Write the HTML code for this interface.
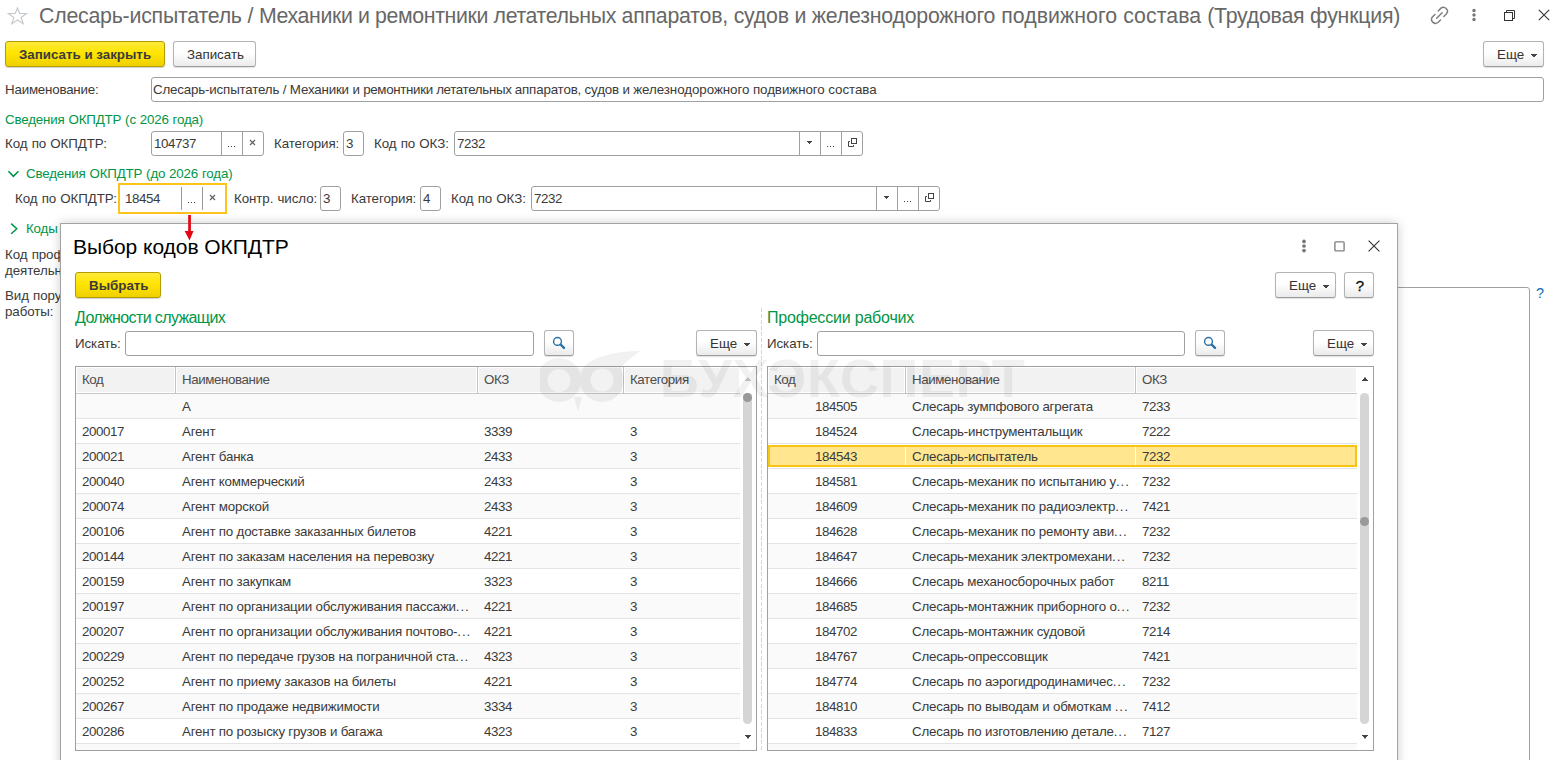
<!DOCTYPE html>
<html lang="ru"><head><meta charset="utf-8"><title>1C</title>
<style>
*{box-sizing:border-box;margin:0;padding:0}
html,body{width:1555px;height:760px;overflow:hidden;background:#fff}
body{font-family:"Liberation Sans",sans-serif;font-size:13.33px;letter-spacing:-0.2px;color:#3a3a3a;position:relative}
.a{position:absolute;white-space:nowrap}
.t{position:absolute;white-space:nowrap;line-height:16px;height:17px;padding-top:1px;letter-spacing:-0.08px;word-spacing:0.6px}
.g{color:#009646}
.title{left:39px;top:3px;font-size:21.3px;letter-spacing:-0.215px !important;line-height:26px;height:26px;color:#676767}
.btn{position:absolute;height:26px;border:1px solid #b3b3b3;border-bottom-color:#9c9c9c;border-radius:3px;background:linear-gradient(#fff 0%,#fff 45%,#ebebeb 100%);box-shadow:0 1px 1px rgba(0,0,0,.12);line-height:24px;white-space:nowrap;color:#333}
.btn.y{border-color:#b39b00;background:linear-gradient(#ffe93d 0%,#ffe500 45%,#efd000 100%);font-weight:bold;color:#3b3b3b;box-shadow:0 1px 1px rgba(0,0,0,.18)}
.btn .tx{position:absolute;top:1px;letter-spacing:0}
.tri{position:absolute;width:6px;height:3px;background:linear-gradient(#444,#444) 0 0/6px 1px no-repeat,linear-gradient(#444,#444) 1px 1px/4px 1px no-repeat,linear-gradient(#444,#444) 2px 2px/2px 1px no-repeat}
.tri5{position:absolute;width:5px;height:3px;background:linear-gradient(#444,#444) 0 0/5px 1px no-repeat,linear-gradient(#444,#444) 1px 1px/3px 1px no-repeat,linear-gradient(#444,#444) 2px 2px/1px 1px no-repeat}
.fld{position:absolute;height:25px;border:1px solid #a0a0a0;border-radius:3px;background:#fff;line-height:23px}
.fld .v{position:absolute;left:1px;top:0}
.sep{position:absolute;top:0;bottom:0;width:1px;background:#a0a0a0}
.dots{position:absolute;top:14px;width:7px;height:1px;background:
 linear-gradient(90deg,#444 0 1px,transparent 1px 3px,#444 3px 4px,transparent 4px 6px,#444 6px 7px)}
.x{position:absolute;width:7px;height:7px}
.tbl{position:absolute;border:1px solid #a0a0a0;background:#fff;overflow:hidden}
.hd{position:absolute;left:0;top:0;height:27px;background:#fff;border-bottom:1px solid #c8c8c8}
.hcell{position:absolute;top:0;height:26px;background:#f2f2f2;border:1px solid #fff;line-height:24px;color:#4d4d4d;white-space:nowrap;letter-spacing:-0.4px}
.hcell span{position:absolute;left:5px;top:0}
.hsep{position:absolute;top:0;width:1px;height:27px;background:#c4c4c4}
.rows{position:absolute;left:0;top:27px;height:360px}
.r{position:absolute;left:0;right:0;height:25px;border-bottom:1px solid #e3e3e3;background:#fff;line-height:26px}
.r.odd{background:#fafafa}
.r.sel{background:#fff}
.selbox{position:absolute;left:0;right:0;top:1px;height:22px;background:#ffe68f;border:2px solid #f9c515}
.selbox i{position:absolute;top:0;width:1px;height:18px;background:#fff}
.c{position:absolute;top:0;white-space:nowrap}
.track{position:absolute;width:8.6px;border-radius:4.3px;background:#d5d5d5}
.knob{position:absolute;width:8.8px;height:8.8px;border-radius:4.4px;background:#999}
.up{position:absolute;width:6px;height:4px;--c:#444;background:linear-gradient(var(--c),var(--c)) 0 3px/6px 1px no-repeat,linear-gradient(var(--c),var(--c)) 1px 2px/4px 1px no-repeat,linear-gradient(var(--c),var(--c)) 2px 1px/2px 1px no-repeat,linear-gradient(var(--t),var(--t)) 2px 0/2px 1px no-repeat;--t:#a8a8a8}
.dn{position:absolute;width:6px;height:4px;--c:#444;background:linear-gradient(#b0b0b0,#b0b0b0) 2px 3px/2px 1px no-repeat,linear-gradient(var(--c),var(--c)) 0 0/6px 1px no-repeat,linear-gradient(var(--c),var(--c)) 1px 1px/4px 1px no-repeat,linear-gradient(var(--c),var(--c)) 2px 2px/2px 1px no-repeat}
#dlg{position:absolute;left:60px;top:223px;width:1338px;height:560px;background:#fff;border:1px solid #a3a3a3;box-shadow:0 0 10px rgba(0,0,0,.2)}
.wm{position:absolute;opacity:.05;color:#000;pointer-events:none}
.n{letter-spacing:-0.41px}
.btn.y .tx{letter-spacing:0px}
.title,.big{letter-spacing:0}
.e{letter-spacing:0.9px}
.t.g{letter-spacing:-0.16px;word-spacing:0.3px}
.fld .v.n{left:2px}

</style></head>
<body>
<!-- ===== main form ===== -->
<svg class="a" style="left:6px;top:5px" width="23" height="22" viewBox="0 0 23 22"><path d="M11.5 3.05 L13.75 8.45 L20.5 8.45 L15.1 12.5 L17.2 18.7 L11.5 15 L5.8 18.7 L7.9 12.5 L2.35 8.45 L9.25 8.45 Z" fill="none" stroke="#c3c8cc" stroke-width="1.1" stroke-linejoin="miter"/></svg>
<div class="a title">Слесарь-испытатель / <span style="letter-spacing:-0.362px">Механики и ремонтники летательных </span>аппаратов, судов и железнодорожного<span style="letter-spacing:0.05px"> подвижного состава </span>(Трудовая функция)</div>

<!-- top right icons -->
<svg class="a" style="left:1430px;top:6px" width="19" height="19" viewBox="0 0 19 19" fill="none" stroke="#7e7e7e" stroke-width="1.45" stroke-linecap="round"><path d="M8.2 4.9 L10.7 2.4 A4 4 0 0 1 16.3 8.1 L13.8 10.6"/><path d="M4.9 8.4 L2.4 10.9 A4 4 0 0 0 8 16.5 L10.5 14"/><path d="M6.7 12.2 L12.1 6.8"/></svg>
<svg class="a" style="left:1471px;top:8px" width="6" height="14" viewBox="0 0 6 14"><circle cx="3" cy="2.5" r="1.7" fill="#777"/><circle cx="3" cy="7" r="1.7" fill="#777"/><circle cx="3" cy="11.5" r="1.7" fill="#777"/></svg>
<svg class="a" style="left:1504px;top:10px" width="12" height="12" viewBox="0 0 12 12" fill="none" stroke="#333" stroke-width="1"><path d="M2.5 2.5 V0.5 H10.5 V8.5 H8.5"/><rect x="0.5" y="2.5" width="8" height="8"/></svg>
<svg class="a" style="left:1538px;top:9px" width="12" height="12" viewBox="0 0 12 12" stroke="#333" stroke-width="1.1"><path d="M0.8 0.8 L11.2 11.2 M11.2 0.8 L0.8 11.2"/></svg>

<!-- command bar -->
<div class="btn y" style="left:5px;top:41px;width:160px"><span class="tx" style="left:13px">Записать и закрыть</span></div>
<div class="btn" style="left:173px;top:41px;width:83px"><span class="tx" style="left:13px">Записать</span></div>
<div class="btn" style="left:1483px;top:41px;width:61px"><span class="tx" style="left:13px">Еще</span><i class="tri" style="left:47px;top:12px"></i></div>

<!-- Наименование -->
<div class="t" style="left:5px;top:81px;letter-spacing:-0.2px">Наименование:</div>
<div class="fld" style="left:151px;top:77px;width:1393px"><span class="v" style="letter-spacing:-0.17px">Слесарь-испытатель / Механики и <span style="letter-spacing:-0.34px">ремонтники летательных </span>аппаратов, судов и <span style="letter-spacing:-0.055px">железнодорожного подвижного состава</span></span></div>

<!-- group 1 -->
<div class="t g" style="left:5px;top:111px">Сведения ОКПДТР (с 2026 года)</div>
<div class="t" style="left:5px;top:135px">Код по ОКПДТР:</div>
<div class="fld" style="left:151px;top:131px;width:113px"><span class="v n">104737</span><i class="sep" style="left:69px"></i><i class="dots" style="left:76px"></i><i class="sep" style="left:90px"></i>
<svg class="x" style="left:97px;top:7px" viewBox="0 0 7 7" stroke="#606060" stroke-width="1.15"><path d="M1 1 L6 6 M6 1 L1 6"/></svg></div>
<div class="t" style="left:274px;top:135px">Категория:</div>
<div class="fld" style="left:343px;top:131px;width:21px"><span class="v n">3</span></div>
<div class="t" style="left:374px;top:135px">Код по ОКЗ:</div>
<div class="fld" style="left:454px;top:131px;width:409px"><span class="v n">7232</span><i class="sep" style="left:344px"></i><i class="tri5" style="left:352px;top:9px"></i><i class="sep" style="left:365px"></i><i class="dots" style="left:372px"></i><i class="sep" style="left:386px"></i>
<svg class="a" style="left:393px;top:6px" width="9" height="9" viewBox="0 0 9 9" fill="none" stroke="#444" stroke-width="1"><rect x="3.5" y="0.5" width="5" height="5"/><path d="M2 3.5 H0.5 V8.5 H5.5 V7"/></svg></div>

<!-- group 2 -->
<svg class="a" style="left:7px;top:169px" width="14" height="10" viewBox="0 0 14 10" fill="none" stroke="#009646" stroke-width="1.6"><path d="M1.4 2.2 L6.4 7.4 L11.4 2.2"/></svg>
<div class="t g" style="left:26px;top:165px">Сведения ОКПДТР (до 2026 года)</div>
<div class="t" style="left:15px;top:190px">Код по ОКПДТР:</div>
<div class="a" style="left:118px;top:183px;width:109px;height:31px;border:2px solid #fbc31c;background:#fff">
 <span class="a n" style="left:5px;top:6px;line-height:16px">18454</span>
 <i class="a" style="left:61px;top:2px;width:1px;height:23px;background:#999"></i><i class="dots" style="left:68px;top:17px"></i>
 <i class="a" style="left:82px;top:2px;width:1px;height:23px;background:#999"></i>
 <svg class="x" style="left:89px;top:9px" viewBox="0 0 7 7" stroke="#606060" stroke-width="1.15"><path d="M1 1 L6 6 M6 1 L1 6"/></svg>
</div>
<div class="t" style="left:234px;top:190px">Контр. число:</div>
<div class="fld" style="left:320px;top:186px;width:21px"><span class="v n">3</span></div>
<div class="t" style="left:351px;top:190px">Категория:</div>
<div class="fld" style="left:420px;top:186px;width:21px"><span class="v n">4</span></div>
<div class="t" style="left:451px;top:190px">Код по ОКЗ:</div>
<div class="fld" style="left:531px;top:186px;width:409px"><span class="v n">7232</span><i class="sep" style="left:344px"></i><i class="tri5" style="left:352px;top:9px"></i><i class="sep" style="left:365px"></i><i class="dots" style="left:372px"></i><i class="sep" style="left:386px"></i>
<svg class="a" style="left:393px;top:6px" width="9" height="9" viewBox="0 0 9 9" fill="none" stroke="#444" stroke-width="1"><rect x="3.5" y="0.5" width="5" height="5"/><path d="M2 3.5 H0.5 V8.5 H5.5 V7"/></svg></div>

<!-- group 3 (partly hidden) -->
<svg class="a" style="left:9px;top:222px" width="10" height="14" viewBox="0 0 10 14" fill="none" stroke="#009646" stroke-width="1.5"><path d="M2.2 1.6 L7.8 6.7 L2.2 11.8"/></svg>
<div class="t g" style="left:26px;top:220px">Коды</div>
<div class="t" style="left:5px;top:246px">Код проф</div>
<div class="t" style="left:5px;top:262px">деятельн</div>
<div class="t" style="left:5px;top:287px">Вид пору</div>
<div class="t" style="left:5px;top:303px">работы:</div>
<div class="fld" style="left:151px;top:287px;width:1379px;height:600px"></div>
<div class="t" style="left:1536px;top:284px;font-size:14.4px;color:#0f6db8">?</div>

<!-- ===== dialog ===== -->
<div id="dlg"></div>
<div class="a" style="left:73px;top:234px;font-size:21px;letter-spacing:-0.05px;line-height:26px;color:#000">Выбор кодов ОКПДТР</div>
<!-- red arrow -->
<svg class="a" style="left:183px;top:214px" width="12" height="28" viewBox="0 0 12 28"><path d="M5.2 1 H7.9 V17 H10.5 L6.55 26.5 L1.7 17 H5.2 Z" fill="#e30613"/></svg>
<svg class="a" style="left:1301px;top:238px" width="6" height="16" viewBox="0 0 6 16"><circle cx="3" cy="3.4" r="1.85" fill="#777"/><circle cx="3" cy="8" r="1.85" fill="#777"/><circle cx="3" cy="12.6" r="1.85" fill="#777"/></svg>
<svg class="a" style="left:1334px;top:241px" width="11" height="11" viewBox="0 0 11 11" fill="none" stroke="#828282" stroke-width="1.4"><rect x="0.9" y="0.9" width="9.2" height="9" rx="0.8"/></svg>
<svg class="a" style="left:1368px;top:240px" width="12" height="12" viewBox="0 0 12 12" stroke="#333" stroke-width="1.1"><path d="M0.6 0.6 L11.4 11.4 M11.4 0.6 L0.6 11.4"/></svg>

<div class="btn y" style="left:75px;top:272px;width:86px"><span class="tx" style="left:13px">Выбрать</span></div>
<div class="btn" style="left:1275px;top:272px;width:61px"><span class="tx" style="left:13px">Еще</span><i class="tri" style="left:47px;top:12px"></i></div>
<div class="btn" style="left:1344px;top:272px;width:30px"><span class="tx" style="left:10.5px;top:1px;font-size:15.5px;color:#111;-webkit-text-stroke:0.3px #111">?</span></div>

<!-- left panel -->
<div class="a g" style="left:75px;top:309px;font-size:16px;letter-spacing:-0.62px;line-height:18px">Должности служащих</div>
<div class="t" style="left:75px;top:335px">Искать:</div>
<div class="fld" style="left:125px;top:331px;width:409px"></div>
<div class="btn" style="left:544px;top:330px;width:30px"><svg class="a" style="left:7px;top:5px" width="14" height="14" viewBox="0 0 14 14" fill="none" stroke="#2b70a4"><circle cx="5.5" cy="5.4" r="3.9" stroke-width="1.4"/><path d="M8.6 8.5 L12 11.9" stroke-width="2.4" stroke-linecap="round"/></svg></div>
<div class="btn" style="left:696px;top:330px;width:61px"><span class="tx" style="left:13px">Еще</span><i class="tri" style="left:47px;top:12px"></i></div>

<div class="tbl" style="left:75px;top:366px;width:682px;height:385px">
 <div class="hd" style="width:664px"></div>
 <div class="hcell" style="left:0;width:99px"><span>Код</span></div><i class="hsep" style="left:99px"></i>
 <div class="hcell" style="left:100px;width:301px"><span>Наименование</span></div><i class="hsep" style="left:401px"></i>
 <div class="hcell" style="left:402px;width:145px"><span>ОКЗ</span></div><i class="hsep" style="left:547px"></i>
 <div class="hcell" style="left:548px;width:116px"><span>Категория</span></div>
 <div class="rows" style="width:664px">
<div class="r odd" style="top:0px"><span class="c n" style="left:6px"></span><span class="c" style="left:106px">А</span><span class="c n" style="left:408px"></span><span class="c n" style="left:554px"></span></div>
<div class="r" style="top:25px"><span class="c n" style="left:6px">200017</span><span class="c" style="left:106px">Агент</span><span class="c n" style="left:408px">3339</span><span class="c n" style="left:554px">3</span></div>
<div class="r odd" style="top:50px"><span class="c n" style="left:6px">200021</span><span class="c" style="left:106px">Агент банка</span><span class="c n" style="left:408px">2433</span><span class="c n" style="left:554px">3</span></div>
<div class="r" style="top:75px"><span class="c n" style="left:6px">200040</span><span class="c" style="left:106px">Агент коммерческий</span><span class="c n" style="left:408px">2433</span><span class="c n" style="left:554px">3</span></div>
<div class="r odd" style="top:100px"><span class="c n" style="left:6px">200074</span><span class="c" style="left:106px">Агент морской</span><span class="c n" style="left:408px">2433</span><span class="c n" style="left:554px">3</span></div>
<div class="r" style="top:125px"><span class="c n" style="left:6px">200106</span><span class="c" style="left:106px">Агент по доставке заказанных билетов</span><span class="c n" style="left:408px">4221</span><span class="c n" style="left:554px">3</span></div>
<div class="r odd" style="top:150px"><span class="c n" style="left:6px">200144</span><span class="c" style="left:106px">Агент по заказам населения на перевозку</span><span class="c n" style="left:408px">4221</span><span class="c n" style="left:554px">3</span></div>
<div class="r" style="top:175px"><span class="c n" style="left:6px">200159</span><span class="c" style="left:106px">Агент по закупкам</span><span class="c n" style="left:408px">3323</span><span class="c n" style="left:554px">3</span></div>
<div class="r odd" style="top:200px"><span class="c n" style="left:6px">200197</span><span class="c" style="left:106px">Агент по организации обслуживания пассажи<span class="e">...</span></span><span class="c n" style="left:408px">4221</span><span class="c n" style="left:554px">3</span></div>
<div class="r" style="top:225px"><span class="c n" style="left:6px">200207</span><span class="c" style="left:106px">Агент по организации обслуживания почтово-<span class="e">...</span></span><span class="c n" style="left:408px">4221</span><span class="c n" style="left:554px">3</span></div>
<div class="r odd" style="top:250px"><span class="c n" style="left:6px">200229</span><span class="c" style="left:106px">Агент по передаче грузов на пограничной ста<span class="e">...</span></span><span class="c n" style="left:408px">4323</span><span class="c n" style="left:554px">3</span></div>
<div class="r" style="top:275px"><span class="c n" style="left:6px">200252</span><span class="c" style="left:106px">Агент по приему заказов на билеты</span><span class="c n" style="left:408px">4221</span><span class="c n" style="left:554px">3</span></div>
<div class="r odd" style="top:300px"><span class="c n" style="left:6px">200267</span><span class="c" style="left:106px">Агент по продаже недвижимости</span><span class="c n" style="left:408px">3334</span><span class="c n" style="left:554px">3</span></div>
<div class="r" style="top:325px"><span class="c n" style="left:6px">200286</span><span class="c" style="left:106px">Агент по розыску грузов и багажа</span><span class="c n" style="left:408px">4323</span><span class="c n" style="left:554px">3</span></div>
<div class="r odd" style="top:350px;height:7px;border-bottom:0"></div>
 </div>
 <i class="up" style="left:669px;top:10px;--c:#c6c6c6;--t:#e8e8e8"></i>
 <i class="track" style="left:667.3px;top:26px;height:330.8px"></i>
 <i class="knob" style="left:667.2px;top:26px"></i>
 <i class="dn" style="left:669px;top:368px"></i>
</div>

<!-- splitter -->
<div class="a" style="left:761px;top:308px;width:1px;height:442px;background:repeating-linear-gradient(180deg,#d6d6d6 0 4px,transparent 4px 6px)"></div>

<!-- right panel -->
<div class="a g" style="left:767px;top:309px;font-size:16px;letter-spacing:-0.2px;line-height:18px">Профессии рабочих</div>
<div class="t" style="left:767px;top:335px">Искать:</div>
<div class="fld" style="left:817px;top:331px;width:368px"></div>
<div class="btn" style="left:1195px;top:330px;width:30px"><svg class="a" style="left:7px;top:5px" width="14" height="14" viewBox="0 0 14 14" fill="none" stroke="#2b70a4"><circle cx="5.5" cy="5.4" r="3.9" stroke-width="1.4"/><path d="M8.6 8.5 L12 11.9" stroke-width="2.4" stroke-linecap="round"/></svg></div>
<div class="btn" style="left:1313px;top:330px;width:61px"><span class="tx" style="left:13px">Еще</span><i class="tri" style="left:47px;top:12px"></i></div>

<div class="tbl" style="left:767px;top:366px;width:607px;height:385px">
 <div class="hd" style="width:589px"></div>
 <div class="hcell" style="left:0;width:137px"><span>Код</span></div><i class="hsep" style="left:137px"></i>
 <div class="hcell" style="left:138px;width:229px"><span>Наименование</span></div><i class="hsep" style="left:367px"></i>
 <div class="hcell" style="left:368px;width:221px"><span>ОКЗ</span></div>
 <div class="rows" style="width:589px">
<div class="r odd" style="top:0px"><span class="c n" style="left:47px">184505</span><span class="c" style="left:144px">Слесарь зумпфового агрегата</span><span class="c n" style="left:374px">7233</span></div>
<div class="r" style="top:25px"><span class="c n" style="left:47px">184524</span><span class="c" style="left:144px">Слесарь-инструментальщик</span><span class="c n" style="left:374px">7222</span></div>
<div class="r sel" style="top:50px"><div class="selbox"><i style="left:135px"></i><i style="left:365px"></i></div><span class="c n" style="left:47px">184543</span><span class="c" style="left:144px">Слесарь-испытатель</span><span class="c n" style="left:374px">7232</span></div>
<div class="r" style="top:75px"><span class="c n" style="left:47px">184581</span><span class="c" style="left:144px">Слесарь-механик по испытанию у<span class="e">...</span></span><span class="c n" style="left:374px">7232</span></div>
<div class="r odd" style="top:100px"><span class="c n" style="left:47px">184609</span><span class="c" style="left:144px">Слесарь-механик по радиоэлектр<span class="e">...</span></span><span class="c n" style="left:374px">7421</span></div>
<div class="r" style="top:125px"><span class="c n" style="left:47px">184628</span><span class="c" style="left:144px">Слесарь-механик по ремонту ави<span class="e">...</span></span><span class="c n" style="left:374px">7232</span></div>
<div class="r odd" style="top:150px"><span class="c n" style="left:47px">184647</span><span class="c" style="left:144px">Слесарь-механик электромехани<span class="e">...</span></span><span class="c n" style="left:374px">7232</span></div>
<div class="r" style="top:175px"><span class="c n" style="left:47px">184666</span><span class="c" style="left:144px">Слесарь механосборочных работ</span><span class="c n" style="left:374px">8211</span></div>
<div class="r odd" style="top:200px"><span class="c n" style="left:47px">184685</span><span class="c" style="left:144px">Слесарь-монтажник приборного о<span class="e">...</span></span><span class="c n" style="left:374px">7232</span></div>
<div class="r" style="top:225px"><span class="c n" style="left:47px">184702</span><span class="c" style="left:144px">Слесарь-монтажник судовой</span><span class="c n" style="left:374px">7214</span></div>
<div class="r odd" style="top:250px"><span class="c n" style="left:47px">184767</span><span class="c" style="left:144px">Слесарь-опрессовщик</span><span class="c n" style="left:374px">7421</span></div>
<div class="r" style="top:275px"><span class="c n" style="left:47px">184774</span><span class="c" style="left:144px">Слесарь по аэрогидродинамичес<span class="e">...</span></span><span class="c n" style="left:374px">7232</span></div>
<div class="r odd" style="top:300px"><span class="c n" style="left:47px">184810</span><span class="c" style="left:144px">Слесарь по выводам и обмоткам <span class="e">...</span></span><span class="c n" style="left:374px">7412</span></div>
<div class="r" style="top:325px"><span class="c n" style="left:47px">184833</span><span class="c" style="left:144px">Слесарь по изготовлению детале<span class="e">...</span></span><span class="c n" style="left:374px">7127</span></div>
<div class="r odd" style="top:350px;height:7px;border-bottom:0"></div>
 </div>
 <i class="up" style="left:594px;top:10px"></i>
 <i class="track" style="left:592.3px;top:26px;height:330.8px"></i>
 <i class="knob" style="left:592.2px;top:150.1px"></i>
 <i class="dn" style="left:594px;top:368px"></i>
</div>

<!-- watermark -->
<div class="wm" style="left:660px;top:346px;font-size:54px;font-weight:bold;line-height:64px;letter-spacing:0.7px">БУХЭКСПЕРТ</div>
<svg class="wm" style="left:540px;top:345px" width="105" height="70" viewBox="0 0 105 70"><path fill-rule="evenodd" d="M17 13 A22 22 0 1 0 17.1 13 Z M17 24 A11.5 11.5 0 1 1 16.9 24 Z" transform="translate(2,0)"/><circle cx="62" cy="35" r="22" /><circle cx="62" cy="35" r="11.5" fill="#fff"/><path d="M55 14 C70 8 85 6 100 6 C92 12 84 18 80 24 Z"/><path d="M34 52 L42 52 L38 66 Z"/></svg>

</body></html>
